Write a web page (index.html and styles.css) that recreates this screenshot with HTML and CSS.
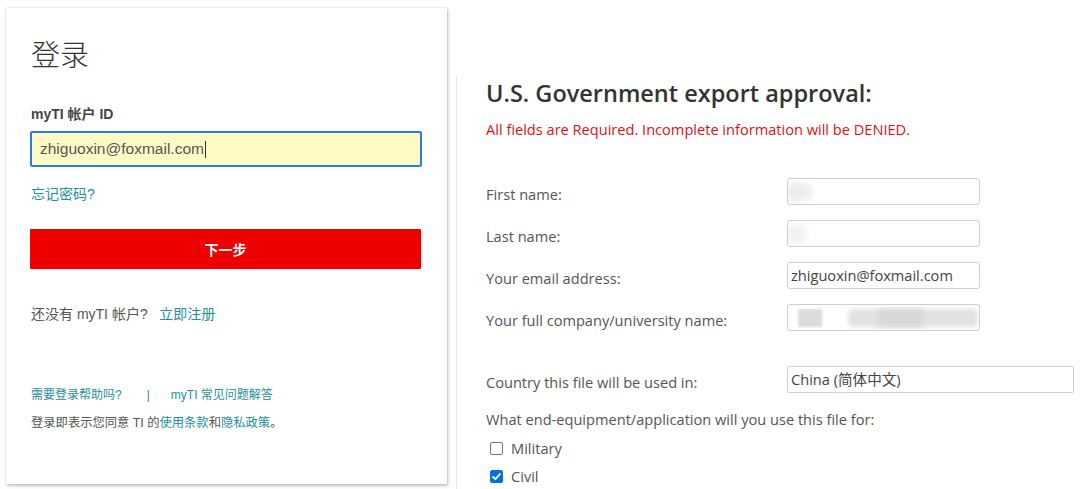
FILE: index.html
```html
<!DOCTYPE html>
<html lang="zh">
<head>
<meta charset="utf-8">
<link rel="stylesheet" href="styles.css">
</head>
<body>
<div class="page">
  <div class="card">
    <h1 class="title">登录</h1>
    <div class="label">myTI 帐户 ID</div>
    <div class="id-input">zhiguoxin@foxmail.com<span class="caret"></span></div>
    <a class="link forgot">忘记密码?</a>
    <div class="btn">下一步</div>
    <div class="signup">还没有 myTI 帐户?&nbsp;&nbsp; <a class="link">立即注册</a></div>
    <div class="help"><a class="link">需要登录帮助吗?</a><span class="sep">|</span><a class="link">myTI 常见问题解答</a></div>
    <div class="terms">登录即表示您同意 TI 的<a class="link">使用条款</a>和<a class="link">隐私政策</a>。</div>
  </div>
  <div class="divider"></div>
  <div class="export">
    <h2 class="ex-title">U.S. Government export approval:</h2>
    <p class="req">All fields are Required. Incomplete information will be DENIED.</p>
    <div class="rows">
      <div class="row"><span class="lbl">First name:</span><div class="field"><span class="blur b1"></span></div></div>
      <div class="row"><span class="lbl">Last name:</span><div class="field"><span class="blur b2"></span></div></div>
      <div class="row"><span class="lbl">Your email address:</span><div class="field">zhiguoxin@foxmail.com</div></div>
      <div class="row"><span class="lbl">Your full company/university name:</span><div class="field company"><span class="blur b3"></span><span class="blur b4"></span><span class="blur b5"></span></div></div>
      <div class="row country"><span class="lbl">Country this file will be used in:</span><div class="field wide">China (简体中文)</div></div>
    </div>
    <div class="question">What end-equipment/application will you use this file for:</div>
    <div class="check"><span class="box"></span>Military</div>
    <div class="check"><span class="box checked"><svg viewBox="0 0 13 13" width="13" height="13"><path d="M3 6.8 L5.4 9.2 L10 4" fill="none" stroke="#fff" stroke-width="1.8" stroke-linecap="round" stroke-linejoin="round"/></svg></span>Civil</div>
  </div>
</div>
</body>
</html>
```
FILE: styles.css
```css
* { box-sizing: border-box; }
html, body { margin: 0; padding: 0; background: #fff; }
body { width: 1080px; height: 489px; overflow: hidden; }
.page { display: flex; align-items: flex-start; }

.card {
  margin: 8px 0 0 6px;
  width: 441px;
  height: 476px;
  padding: 28px 25px 0 24px;
  background: #fff;
  box-shadow: 0 0 2px rgba(0,0,0,0.18), 1px 2px 3px rgba(0,0,0,0.22);
  font-family: "Liberation Sans", "Noto Sans CJK SC", sans-serif;
  color: #555;
}
.title {
  margin: 0 0 0 1px;
  font-size: 29px;
  line-height: 34px;
  font-weight: 300;
  color: #333;
  font-family: "Noto Sans CJK SC", sans-serif;
}
.label {
  margin: 35px 0 0 1px;
  font-size: 14px;
  line-height: 18px;
  font-weight: bold;
  color: #444;
}
.id-input {
  margin-top: 8px;
  height: 36px;
  width: 392px;
  border: 2px solid #2c7be5;
  border-radius: 2px;
  background: #fefac6;
  padding: 0 8px;
  font-size: 15.5px;
  line-height: 32px;
  color: #555;
  display: flex;
  align-items: center;
}
.caret { display: inline-block; width: 1px; height: 17px; background: #333; margin-left: 1px; }
.link { color: #24909b; text-decoration: none; }
.forgot { display: block; margin: 18px 0 0 1px; font-size: 14px; line-height: 18px; }
.btn {
  margin-top: 26px;
  width: 391px;
  height: 40px;
  background: #ee0000;
  color: #fff;
  font-weight: bold;
  font-size: 14px;
  line-height: 40px;
  text-align: center;
  border-radius: 1px;
  font-family: "Noto Sans CJK SC", sans-serif;
}
.signup { margin: 35px 0 0 1px; font-size: 14px; line-height: 20px; color: #555; }
.help { margin: 63px 0 0 1px; font-size: 12px; line-height: 16px; display: flex; }
.sep { color: #24909b; margin: 0 21px 0 25px; }
.terms { margin: 12px 0 0 1px; font-size: 12.3px; line-height: 16px; color: #555; }

.divider {
  margin: 76px 0 0 9px;
  width: 1px;
  height: 413px;
  background: #e6e6e6;
}
.export {
  padding: 78px 0 0 29px;
  font-family: "Open Sans", sans-serif;
  color: #555;
  flex: 1;
}
.ex-title { margin: 0; font-size: 23.5px; line-height: 30px; font-weight: 600; color: #333; }
.req { margin: 11px 0 0; font-size: 14.6px; line-height: 20px; color: #dd1111; }
.rows { margin-top: 39px; display: flex; flex-direction: column; gap: 15px; }
.row { display: grid; grid-template-columns: 301px auto; align-items: center; height: 27px; }
.row.country { margin-top: 20px; }
.lbl { font-size: 14.6px; line-height: 20px; position: relative; top: 2px; }
.field {
  position: relative;
  width: 193px;
  height: 27px;
  border: 1px solid #cfcfcf;
  border-radius: 3px;
  padding: 0 3px;
  font-size: 14.6px;
  line-height: 25px;
  color: #444;
  overflow: hidden;
  font-family: "Open Sans", "Noto Sans CJK SC", sans-serif;
}
.field.wide { width: 287px; border-radius: 2px; }
.blur { position: absolute; filter: blur(3px); background: #e4e4e4; }
.b1 { left: -2px; top: 3px; width: 26px; height: 20px; border-radius: 50%; background: #ececec; }
.b2 { left: 0; top: 3px; width: 18px; height: 20px; border-radius: 50%; background: #efefef; }
.b3 { left: 10px; top: 4px; width: 24px; height: 18px; background: #dcdcdc; filter: blur(1px); }
.b4 { left: 60px; top: 4px; width: 130px; height: 18px; background: #e2e2e2; filter: blur(2px); border-radius: 6px; }
.b5 { left: 90px; top: 4px; width: 45px; height: 18px; background: #d8d8d8; filter: blur(2px); }
.question { margin-top: 16px; font-size: 14.6px; line-height: 20px; }
.check { display: flex; align-items: center; height: 20px; margin-top: 9px; font-size: 14.6px; }
.check + .check { margin-top: 8px; }
.box {
  width: 13px; height: 13px;
  margin: 0 8px 0 4px;
  border: 1px solid #767676;
  border-radius: 2px;
  background: #fff;
  display: inline-flex;
}
.box.checked { background: #0b6ee0; border-color: #0b6ee0; }
.box.checked svg { margin: -1px; }
```
